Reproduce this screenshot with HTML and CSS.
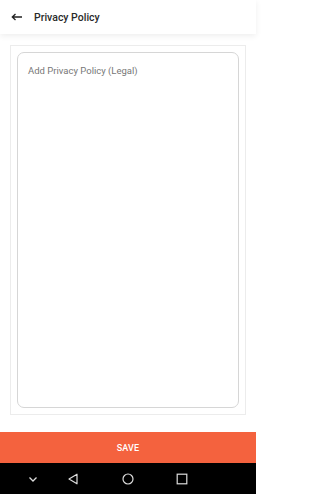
FILE: index.html
```html
<!DOCTYPE html>
<html>
<head>
<meta charset="utf-8">
<link rel="stylesheet" href="styles.css">
</head>
<body>
<div class="app">
  <header class="topbar">
    <svg class="back" width="12" height="8" viewBox="0 0 12 8"><path d="M11 4H1.5M4.5 1L1.3 4l3.2 3" fill="none" stroke="#222" stroke-width="1.3"/></svg>
    <span class="title">Privacy Policy</span>
  </header>
  <main class="content">
    <div class="card">
      <div class="field">Add Privacy Policy (Legal)</div>
    </div>
  </main>
  <button class="save">SAVE</button>
  <nav class="navbar">
    <svg width="12" height="12" viewBox="0 0 12 12"><path d="M2.5 4.5L6 8l3.5-3.5" fill="none" stroke="#ddd" stroke-width="1.3"/></svg>
    <svg width="14" height="14" viewBox="0 0 14 14"><path d="M11 2.2v9.6L3 7z" fill="none" stroke="#ddd" stroke-width="1.2" stroke-linejoin="round"/></svg>
    <svg width="14" height="14" viewBox="0 0 14 14"><circle cx="7" cy="7" r="5" fill="none" stroke="#ddd" stroke-width="1.2"/></svg>
    <svg width="14" height="14" viewBox="0 0 14 14"><rect x="2.2" y="2.2" width="9.6" height="9.6" fill="none" stroke="#ddd" stroke-width="1.2"/></svg>
  </nav>
</div>
</body>
</html>
```
FILE: styles.css
```css
* { box-sizing: border-box; }
html, body { margin: 0; padding: 0; }
body { font-family: Roboto, "Noto Sans", Arial, sans-serif; background: #fff; }
.app { width: 256px; height: 494px; display: flex; flex-direction: column; }
.topbar {
  height: 34px; flex: none; display: flex; align-items: center; padding-left: 11px; gap: 11px;
  background: #fff; box-shadow: 0 2px 6px rgba(0,0,0,0.07); position: relative; z-index: 1;
}
.back { display: block; }
.title { font-size: 10.5px; font-weight: 500; color: #2a2a2a; }
.content { flex: 1; padding: 11px 10px 17px; background: #fff; display: flex; }
.card {
  flex: 1; border: 1px solid #ececec; padding: 6px; display: flex;
}
.field {
  flex: 1; border: 1px solid #d6d6d6; border-radius: 7px;
  padding: 12px 10px; font-size: 9.5px; color: #777;
}
.save {
  flex: none; height: 31px; border: none; margin: 0; background: #f4623e; color: #fff;
  font-family: Roboto, Arial, sans-serif; font-size: 9px; font-weight: 500; letter-spacing: 0.2px;
  width: 100%;
}
.navbar {
  flex: none; height: 31px; background: #000; display: flex; align-items: center;
  padding: 0 0 0 27px;
}
.navbar svg { display: block; }
.navbar svg:nth-child(1) { margin-right: 27px; }
.navbar svg:nth-child(2) { margin-right: 41px; }
.navbar svg:nth-child(3) { margin-right: 40px; }
```
